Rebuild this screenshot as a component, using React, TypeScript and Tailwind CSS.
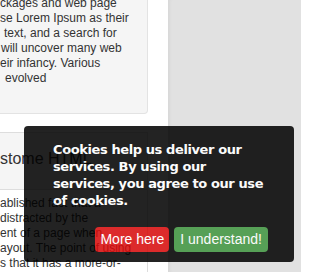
export default function App() {
  const wellLines = [
    { text: "ckages and web page", pad: "pl-0" },
    { text: "se Lorem Ipsum as their", pad: "pl-0" },
    { text: "text, and a search for", pad: "pl-[4px]" },
    { text: "will uncover many web", pad: "pl-[1px]" },
    { text: "eir infancy. Various", pad: "pl-0" },
    { text: "evolved", pad: "pl-[5px]" },
  ];
  const panelLines = [
    "ablished fact that a",
    "distracted by the",
    "ent of a page when",
    "ayout. The point of using",
    "s that it has a more-or-",
  ];

  return (
    <div className="relative flex h-[272px] w-[301px] overflow-hidden bg-white font-['Liberation_Sans',Arial,sans-serif] text-[#333]">
      {/* Main column */}
      <div className="flex w-[168px] shrink-0 flex-col pr-[20px]">
        {/* Well */}
        <div className="-ml-[10px] -mt-[20px] rounded-br-[4px] border border-l-0 border-[#e3e3e3] bg-[#f5f5f5] pb-[27px] pl-[10px] pt-[15px] text-[12px] leading-[15px]">
          {wellLines.map((l) => (
            <div key={l.text} className={`whitespace-nowrap ${l.pad}`}>
              {l.text}
            </div>
          ))}
        </div>

        {/* Panel */}
        <div className="-ml-[10px] mt-[18px] flex-1 border border-b-0 border-l-0 border-[#dddddd]">
          <div className="flex h-[57px] items-center border-b border-[#dddddd] bg-[#f5f5f5] pb-[4px] pl-[10px] text-[16px] whitespace-nowrap">
            stome HTML
          </div>
          <div className="bg-white pl-[10px] pt-[6px] text-[12px] leading-[15px]">
            {panelLines.map((t) => (
              <div key={t} className="whitespace-nowrap">
                {t}
              </div>
            ))}
          </div>
        </div>
      </div>

      {/* Sidebar */}
      <div className="flex-1 bg-[#e1e1e1] shadow-[inset_4px_0_4px_-3px_rgba(0,0,0,0.06)]" />

      {/* Cookie notice */}
      <div className="absolute left-[24px] top-[126px] flex w-[270px] flex-col rounded-[4px] bg-black pb-[10px] pl-[29px] pr-[26px] pt-[15px] opacity-[0.86]">
        <p className="font-['DejaVu_Sans',Verdana,sans-serif] text-[13px] font-bold leading-[17px] tracking-[-0.4px] text-white">
          <span className="block whitespace-nowrap">Cookies help us deliver our</span>
          <span className="block whitespace-nowrap">services. By using our</span>
          <span className="block whitespace-nowrap">services, you agree to our use</span>
          <span className="block whitespace-nowrap">of cookies.</span>
        </p>
        <div className="mt-[18px] flex justify-end gap-[5px]">
          <button className="h-[25px] rounded-[4px] bg-[#d70909] px-[5px] text-[14px] text-white">
            More here
          </button>
          <button className="h-[25px] rounded-[4px] bg-[#409640] px-[6px] text-[14px] text-white">
            I understand!
          </button>
        </div>
      </div>
    </div>
  );
}
